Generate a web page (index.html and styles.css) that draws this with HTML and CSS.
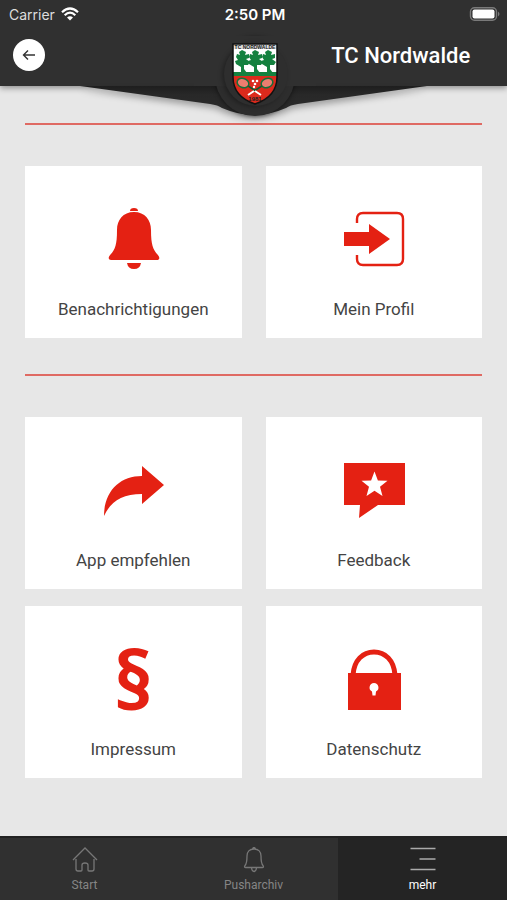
FILE: index.html
```html
<!DOCTYPE html>
<html lang="de">
<head>
<meta charset="utf-8">
<meta name="viewport" content="width=device-width, initial-scale=1">
<title>TC Nordwalde</title>
<link rel="stylesheet" href="styles.css">
</head>
<body>
<div class="app">
  <header class="header">
    <div class="status">
      <div class="carrier">
        <span>Carrier</span>
        <svg width="18" height="14" viewBox="0 0 18 14" aria-hidden="true">
          <path d="M1 5.200Q9-2.200 17 5.200" fill="none" stroke="#fff" stroke-width="2.200"/>
          <path d="M3.700 8.200Q9 3 14.300 8.200" fill="none" stroke="#fff" stroke-width="2.200"/>
          <path d="M6 10.600Q9 7.800 12 10.600L9 13.600Z" fill="#fff"/>
        </svg>
      </div>
      <time class="clock">2:50 PM</time>
      <svg class="battery" width="32" height="14" viewBox="0 0 32 14" aria-hidden="true">
        <rect x="1.500" y="0.700" width="26" height="12.600" rx="4" fill="none" stroke="#7a7a7a" stroke-width="1.400"/>
        <rect x="3.500" y="2.500" width="22" height="9" rx="2" fill="#fff"/>
        <path d="M29 4.500Q32 7 29 9.500Z" fill="#7a7a7a"/>
      </svg>
    </div>
    <div class="titlebar">
      <button class="back" type="button" aria-label="Zurück">
        <svg width="14" height="12" viewBox="0 0 14 12" aria-hidden="true">
          <path d="M6 1.500L1.500 6L6 10.500M1.500 6H13" fill="none" stroke="#333" stroke-width="1.400"/>
        </svg>
      </button>
      <h1 class="title">TC Nordwalde</h1>
    </div>
    <svg class="crest" width="360" height="100" viewBox="0 0 360 100" aria-hidden="true">
      <defs>
        <linearGradient id="fold" x1="0" y1="0" x2="0" y2="1">
          <stop offset="0" stop-color="#1e1e1e"/>
          <stop offset=".3" stop-color="#282828"/>
          <stop offset="1" stop-color="#2c2c2c"/>
        </linearGradient>
        <clipPath id="shield"><path d="M0 0H44V33C44 48 34 56 22 60C10 56 0 48 0 33Z"/></clipPath>
      </defs>
      <path class="fold" d="M6 56L136 74Q144 75 148 78Q180 92 212 78Q216 75 224 74L353 56Z" fill="url(#fold)"/>
      <circle class="disc" cx="181" cy="46" r="40" fill="#2d2d2d"/>
      <path d="M120 6H242V56H120Z" fill="#303030"/>
      <circle class="inner" cx="182" cy="44" r="32" fill="#2e2e2e"/>
      <g transform="translate(159 14)">
        <g clip-path="url(#shield)">
          <path d="M0 0H44V60H0Z" fill="#fff"/>
          <path d="M0 31H44V60H0Z" fill="#dc2a1c"/>
          <path d="M0 0H44V5H0Z" fill="#ddd"/>
          <g fill="#14813f">
            <path d="M0 28H44V32H0Z"/>
            <path id="tree" d="M8 29V23L3 20L2 17L5 16L3 13L4 10L7 11L6 8L9 6L13 8L12 11L16 10L16 14L13 15L17 18L15 21L11 21V25L14 29Z"/>
            <use href="#tree" x="13"/>
            <use href="#tree" x="26"/>
          </g>
          <g fill="#ed7d70" stroke="#14703a" stroke-width="1.500">
            <ellipse cx="10" cy="39" rx="6" ry="4.500" transform="rotate(20 10 39)"/>
            <ellipse cx="34" cy="39" rx="6" ry="4.500" transform="rotate(-20 34 39)"/>
          </g>
          <path d="M15 42L23 47M29 42L21 47" stroke="#145d30" stroke-width="1.500"/>
          <path d="M22 47L28 51M21 47L15 51" stroke="#fff" stroke-width="2"/>
          <g fill="#fff"><circle cx="20" cy="37" r="1.300"/><circle cx="24" cy="37" r="1.300"/><circle cx="22" cy="40" r="1.300"/><circle cx="21" cy="43" r="1.200"/></g>
          <text class="crest-name" x="22" y="5" text-anchor="middle">TC NORDWALDE</text>
          <text class="crest-year" x="22" y="57" text-anchor="middle">1981</text>
        </g>
        <path d="M0 0H44V33C44 48 34 56 22 60C10 56 0 48 0 33Z" fill="none" stroke="#111" stroke-width="1.500"/>
      </g>
    </svg>
  </header>

  <main class="content">
    <hr class="rule">
    <section class="cards">
      <a class="card" href="#benachrichtigungen">
        <svg class="icon" viewBox="0 0 62 62" aria-hidden="true">
          <path d="M28 3Q28 0 32 0Q36 0 36 3Z"/>
          <path d="M32 4C43 4 49 12 49 22C49 37 51 41 55 46C59 50 57 52 55 52H9C7 52 5 50 9 46C13 41 15 37 15 22C15 12 21 4 32 4Z"/>
          <path d="M25 55H39Q38 61 32 61Q26 61 25 55Z"/>
        </svg>
        <span>Benachrichtigungen</span>
      </a>
      <a class="card" href="#profil">
        <svg class="icon" viewBox="0 0 62 62" aria-hidden="true">
          <path d="M1 24H26V16L47 31L26 46V38H1Z"/>
          <path d="M14 15V11Q14 5 20 5H54Q60 5 60 11V51Q60 57 54 57H20Q14 57 14 51V47" fill="none" stroke="#e42113" stroke-width="2.400"/>
        </svg>
        <span>Mein Profil</span>
      </a>
    </section>
    <hr class="rule">
    <section class="cards">
      <a class="card" href="#empfehlen">
        <svg class="icon" viewBox="0 0 62 62" aria-hidden="true">
          <path d="M40 7L62 26L40 45V35C20 35 9 42 2 57C2 32 18 17 40 17Z"/>
        </svg>
        <span>App empfehlen</span>
      </a>
      <a class="card" href="#feedback">
        <svg class="icon" viewBox="0 0 62 62" aria-hidden="true">
          <path fill-rule="evenodd" d="M1 4H62V46H35L16 59L17 46H1ZM31.500 12.500L34.900 21.500L44.500 21.800L37 27.800L39.500 37L31.500 31.700L23.500 37L26 27.800L18.500 21.800L28.100 21.500Z"/>
        </svg>
        <span>Feedback</span>
      </a>
      <a class="card" href="#impressum">
        <b class="icon paragraph" aria-hidden="true">§</b>
        <span>Impressum</span>
      </a>
      <a class="card" href="#datenschutz">
        <svg class="icon" viewBox="0 0 62 62" aria-hidden="true">
          <path d="M10 27C11 12 20 4 31 4C42 4 51 12 52 27" fill="none" stroke="#e42113" stroke-width="5"/>
          <path fill-rule="evenodd" d="M5 25H58V62H5ZM31 35A4.500 4.500 0 0 0 29 43.500L29.500 47.500H32.500L33 43.500A4.500 4.500 0 0 0 31 35Z"/>
        </svg>
        <span>Datenschutz</span>
      </a>
    </section>
  </main>

  <nav class="tabs">
    <a class="tab" href="#start">
      <svg width="26" height="26" viewBox="0 0 26 26" aria-hidden="true">
        <path d="M1 13L13 1L25 13M4 12V22Q4 24 6 24H9Q10 24 10 23V18Q10 16 13 16Q16 16 16 18V23Q16 24 17 24H20Q22 24 22 22V12"/>
      </svg>
      <span>Start</span>
    </a>
    <a class="tab" href="#pusharchiv">
      <svg width="26" height="26" viewBox="0 0 26 26" aria-hidden="true">
        <path d="M13 2C17.500 2 20 5 20 9C20 15 20.500 17 22 18.500C23 20 22 20.500 21.500 20.500H4.500C4 20.500 3 20 4 18.500C5.500 17 6 15 6 9C6 5 8.500 2 13 2ZM10.500 21Q11 24.500 13 24.500Q15 24.500 15.500 21M11.500 2Q13-1 14.500 2"/>
      </svg>
      <span>Pusharchiv</span>
    </a>
    <a class="tab active" href="#mehr" aria-current="page">
      <svg width="26" height="26" viewBox="0 0 26 26" aria-hidden="true">
        <path d="M0.500 1.500H25.500M9.500 12H25.500M0.500 22.500H25.500"/>
      </svg>
      <span>mehr</span>
    </a>
  </nav>
</div>
</body>
</html>
```
FILE: styles.css
```css
* {
  box-sizing: border-box;
}

body {
  margin: 0;
  background: #e7e7e7;
  color: #444;
  font-family: Roboto, "Liberation Sans", sans-serif;
}

a {
  color: inherit;
  text-decoration: none;
}

.app {
  display: flex;
  flex-direction: column;
  min-height: 100vh;
}

.header {
  position: relative;
  height: 86px;
  background: #303030;
  color: #fff;
  box-shadow: 0 2px 6px rgba(0, 0, 0, 0.4);
}

.status {
  display: grid;
  grid-template-columns: 1fr auto 1fr;
  align-items: center;
  height: 28px;
  padding: 0 6px 0 9px;
  font-family: Inter, sans-serif;
  font-size: 14px;
}

.carrier {
  display: flex;
  align-items: center;
  gap: 6px;
  color: #ddd;
}

.clock {
  font-size: 15px;
  font-weight: 600;
}

.battery {
  justify-self: end;
}

.titlebar {
  display: grid;
  grid-template-columns: 1fr 82px 1fr;
  align-items: center;
  height: 54px;
}

.back {
  display: flex;
  align-items: center;
  justify-content: center;
  width: 32px;
  height: 32px;
  margin-left: 13px;
  padding: 0;
  border: 0;
  border-radius: 50%;
  background: #fff;
}

.title {
  grid-column: 3;
  margin: 0;
  font-size: 22px;
  font-weight: 500;
  text-align: center;
}

.crest {
  position: absolute;
  top: 30px;
  left: 50%;
  margin-left: -180px;
  pointer-events: none;
}

.fold {
  filter: drop-shadow(0 4px 3px rgba(0, 0, 0, 0.3));
}

.disc {
  filter: drop-shadow(0 1px 2px rgba(0, 0, 0, 0.5));
}

.inner {
  filter: drop-shadow(-2px 1px 2px rgba(0, 0, 0, 0.3));
}

.crest-name {
  font: bold 5px "Liberation Sans", sans-serif;
  fill: #222;
}

.crest-year {
  font: bold 6px "Liberation Sans", sans-serif;
  fill: #222;
}

.content {
  flex: 1;
  padding: 37px 25px 40px;
}

.rule {
  height: 2px;
  margin: 0 0 41px;
  border: 0;
  background: #df6a63;
}

.cards {
  display: grid;
  grid-template-columns: 1fr 1fr;
  gap: 17px 24px;
}

.cards + .rule {
  margin-top: 36px;
}

.card {
  display: flex;
  flex-direction: column;
  align-items: center;
  gap: 28px;
  height: 172px;
  padding-top: 42px;
  background: #fff;
  font-size: 17px;
  line-height: 22px;
}

.icon {
  width: 62px;
  height: 62px;
  fill: #e42113;
}

.paragraph {
  color: #e42113;
  font-family: "Noto Sans", sans-serif;
  font-size: 80px;
  font-weight: 700;
  line-height: 62px;
  text-align: center;
}

.tabs {
  display: grid;
  grid-template-columns: repeat(3, 1fr);
  height: 64px;
  border-top: 2px solid #222;
  background: #303030;
  color: #858585;
  font-size: 12px;
  line-height: 16px;
}

.tab {
  display: flex;
  flex-direction: column;
  align-items: center;
  gap: 4px;
  padding-top: 9px;
}

.tab svg {
  fill: none;
  stroke: #777;
  stroke-width: 1.3;
}

.active {
  background: #242424;
  color: #fff;
}

.active svg {
  stroke: #aaa;
}
```
